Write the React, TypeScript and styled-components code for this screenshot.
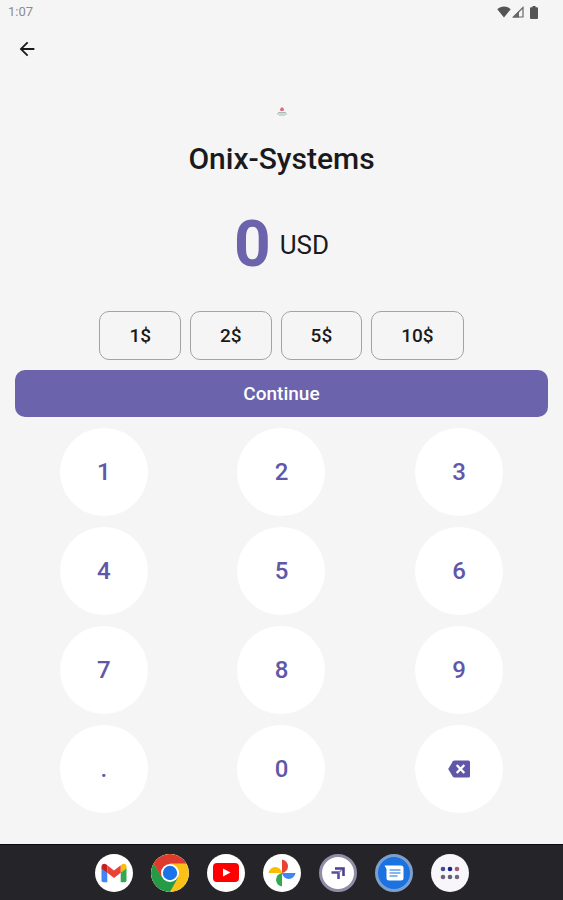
import React, { useState } from "react";
import styled, { createGlobalStyle } from "styled-components";

const purple = "#6b63ab";
const deepPurple = "#6157a8";

const GlobalStyle = createGlobalStyle`
  *, *::before, *::after { box-sizing: border-box; }
  body {
    margin: 0;
    background: #f5f5f5;
    color: #1a1a1c;
    font-family: Roboto, "Liberation Sans", sans-serif;
  }
  button { font-family: inherit; cursor: pointer; }
`;

const Screen = styled.div`
  display: flex;
  flex-direction: column;
  min-height: 100vh;
`;

const StatusBar = styled.header`
  display: flex;
  align-items: center;
  justify-content: space-between;
  height: 24px;
  padding: 0 25px 0 8px;
`;

const Clock = styled.time`
  font-size: 13px;
  line-height: 24px;
  color: #8c8c8c;
`;

const StatusIcons = styled.div`
  display: flex;
  align-items: center;
  gap: 6px;
  svg { display: block; }
`;

const Reception = styled.div`
  display: flex;
  gap: 1px;
`;

const TopBar = styled.nav`
  display: flex;
  align-items: center;
  height: 50px;
  padding: 0 15px;
`;

const BackButton = styled.button`
  display: grid;
  place-items: center;
  width: 24px;
  height: 24px;
  padding: 0;
  border: 0;
  background: none;
`;

const Main = styled.main`
  flex: 1;
  display: flex;
  flex-direction: column;
  padding: 32px 15px 30px;
`;

const Merchant = styled.section`
  display: flex;
  flex-direction: column;
  align-items: center;
  gap: 23px;
`;

const MerchantName = styled.h1`
  margin: 0;
  font-size: 30px;
  line-height: 36px;
  font-weight: 500;
`;

const Amount = styled.output`
  display: flex;
  align-items: center;
  justify-content: center;
  gap: 9px;
  margin: 32px 0 30px;
`;

const AmountValue = styled.span`
  font-size: 64px;
  line-height: 72px;
  font-weight: 700;
  color: ${purple};
`;

const Currency = styled.span`
  font-size: 26px;
  line-height: 32px;
`;

const Presets = styled.div`
  display: flex;
  justify-content: center;
  gap: 9px;
  margin-bottom: 10px;
`;

const Preset = styled.button`
  height: 49px;
  padding: 0 29px;
  border: 1px solid #a3a3a3;
  border-radius: 10px;
  background: transparent;
  color: #1a1a1c;
  font-size: 19px;
  line-height: 24px;
  font-weight: 500;
`;

const ContinueButton = styled.button`
  height: 47px;
  border: 0;
  border-radius: 10px;
  background: ${purple};
  color: #fff;
  font-size: 19px;
  line-height: 24px;
  font-weight: 500;
`;

const Keypad = styled.div`
  display: grid;
  grid-template-columns: repeat(3, 1fr);
  justify-items: center;
  row-gap: 11px;
  margin-top: 11px;
`;

const Key = styled.button`
  display: grid;
  place-items: center;
  width: 88px;
  height: 88px;
  padding: 0;
  border: 0;
  border-radius: 50%;
  background: #fff;
  color: ${deepPurple};
  font-size: 24px;
  line-height: 32px;
  font-weight: 500;
`;

const Dock = styled.footer`
  display: flex;
  align-items: center;
  justify-content: center;
  gap: 18px;
  height: 56px;
  border-top: 1px solid #0c0c0e;
  background: #252529;
`;

const DockApp = styled.button<{ $fill?: string; $ring?: string }>`
  display: grid;
  place-items: center;
  width: 38px;
  height: 38px;
  padding: 0;
  border: ${(p) => (p.$ring ? `3px solid ${p.$ring}` : "0")};
  border-radius: 50%;
  background: ${(p) => p.$fill ?? "#fff"};
  overflow: hidden;
  svg { display: block; }
`;

const WifiIcon = () => (
  <svg width="14" height="12" viewBox="0 0 14 12" aria-hidden="true">
    <path d="M7 11.5 0.3 3.2C2.2 1.5 4.5.6 7 .6s4.800.9 6.700 2.600Z" fill="#555" />
  </svg>
);

const SignalIcon = () => (
  <svg width="12" height="12" viewBox="0 0 12 12" aria-hidden="true">
    <path d="M11 1.500V11H1.500Z" fill="none" stroke="#666" strokeWidth="1.200" />
    <path d="M.5 11.500 7 5v6.500Z" fill="#666" />
  </svg>
);

const BatteryIcon = () => (
  <svg width="8" height="13" viewBox="0 0 8 13" aria-hidden="true">
    <path d="M2.500 0h3v1.300H7a1 1 0 0 1 1 1V12a1 1 0 0 1-1 1H1a1 1 0 0 1-1-1V2.300a1 1 0 0 1 1-1h1.500Z" fill="#555" />
  </svg>
);

const BackIcon = () => (
  <svg width="22" height="22" viewBox="0 0 24 24" aria-hidden="true">
    <path d="M20 11H7.830l5.590-5.590L12 4l-8 8 8 8 1.410-1.410L7.830 13H20z" fill="#1a1a1c" />
  </svg>
);

const MerchantLogo = () => (
  <svg width="12" height="12" viewBox="0 0 12 12" aria-hidden="true">
    <path d="M6 1 8 3 7.500 5h-3L4 3Z" fill="#dc6a7b" />
    <path d="M2 6.500h8M1 8h10" stroke="#a9bcb8" strokeWidth="1.200" />
    <path d="M3 9.500h6" stroke="#cbd6d3" />
  </svg>
);

const BackspaceIcon = () => (
  <svg width="22" height="18" viewBox="0 0 22 18" aria-hidden="true">
    <path d="M6.500.5H20.500A1.500 1.500 0 0 1 22 2v14a1.500 1.500 0 0 1-1.500 1.500h-14a2 2 0 0 1-1.600-.8L.2 9l4.700-7.700A2 2 0 0 1 6.500.5Z" fill={deepPurple} />
    <path d="m8.700 5 7.600 8m0-8-7.600 8" stroke="#fff" strokeWidth="2.400" />
  </svg>
);

const GmailIcon = () => (
  <svg width="26" height="20" viewBox="0 0 26 20" aria-hidden="true">
    <path d="M.5 5v12.500A1.800 1.800 0 0 0 2.300 19.300H6.300V8.500Z" fill="#4285f4" />
    <path d="M25.500 5v12.500a1.800 1.800 0 0 1-1.800 1.800h-4V8.500Z" fill="#34a853" />
    <path d="M19.700 3v6.800l5.800-4.300V3.500c0-2.500-2.700-3.600-4.500-2.200Z" fill="#fbbc04" />
    <path d="M.5 5.500V3.500C.5 1 3.200-.1 5 1.300L6.300 2.300v7.500Z" fill="#c5221f" />
    <path d="M6.300 9.800V2.300L13 7.400l6.700-5.100v7.500L13 14.900Z" fill="#ea4335" />
  </svg>
);

const ChromeIcon = () => (
  <svg width="38" height="38" viewBox="0 0 38 38" aria-hidden="true">
    <circle cx="19" cy="19" r="19" fill="#fbc116" />
    <path d="M2.550 9.500A19 19 0 0 0 19 38l8-14.500-16-.5Z" fill="#259b47" />
    <path d="M2.550 9.500a19 19 0 0 1 32.900 0H19L11 23.500Z" fill="#dc3b2d" />
    <circle cx="19" cy="19" r="9" fill="#fff" />
    <circle cx="19" cy="19" r="7.200" fill="#1a73e8" />
  </svg>
);

const YoutubeIcon = () => (
  <svg width="26" height="19" viewBox="0 0 26 19" aria-hidden="true">
    <rect width="26" height="19" rx="4" fill="#f00" />
    <path d="m10 5.500 7.500 4-7.500 4Z" fill="#fff" />
  </svg>
);

const PhotosIcon = () => (
  <svg width="28" height="28" viewBox="0 0 28 28" aria-hidden="true">
    <path d="M14 14V.5A6.800 6.800 0 0 1 14 14Z" fill="#e94235" />
    <path d="M14 14h13.500A6.800 6.800 0 0 1 14 14Z" fill="#4285f4" />
    <path d="M14 14v13.500A6.800 6.800 0 0 1 14 14Z" fill="#34a853" />
    <path d="M14 14H.5A6.800 6.800 0 0 1 14 14Z" fill="#fbbc04" />
  </svg>
);

const ArrowsIcon = () => (
  <svg width="16" height="16" viewBox="0 0 16 16" aria-hidden="true">
    <path d="M5 3.500h8.500V11" fill="none" stroke="#4d3f92" strokeWidth="2.600" />
    <path d="M1.500 7.500H8.500V14" fill="none" stroke="#5c4da0" strokeWidth="2.600" />
    <path d="m8.500 8 3-3" stroke="#8a80bb" strokeWidth="1.300" />
  </svg>
);

const MessagesIcon = () => (
  <svg width="20" height="16" viewBox="0 0 20 16" aria-hidden="true">
    <path d="M.5.5H17a2.500 2.500 0 0 1 2.500 2.500v10A2.500 2.500 0 0 1 17 15.500H5A2.500 2.500 0 0 1 2.500 13V4Z" fill="#fff" />
    <path d="M5.500 5h11M5.500 8h11M5.500 11h8" stroke="#5e9fea" strokeWidth="1.300" />
  </svg>
);

const AppsIcon = () => (
  <svg width="20" height="14" viewBox="0 0 20 14" aria-hidden="true">
    <circle cx="3" cy="3" r="2.300" fill="#3e4c96" />
    <circle cx="10" cy="3" r="2.300" fill="#20208c" />
    <circle cx="17" cy="3" r="2.300" fill="#a45b7b" />
    <circle cx="3" cy="11" r="2.300" fill="#686878" />
    <circle cx="10" cy="11" r="2.300" fill="#606078" />
    <circle cx="17" cy="11" r="2.300" fill="#706878" />
  </svg>
);

const dockApps = [
  { name: "Gmail", icon: <GmailIcon /> },
  { name: "Chrome", icon: <ChromeIcon /> },
  { name: "YouTube", icon: <YoutubeIcon /> },
  { name: "Photos", icon: <PhotosIcon /> },
  { name: "Payments", icon: <ArrowsIcon />, ring: "#8f8ca6" },
  { name: "Messages", icon: <MessagesIcon />, fill: "#1a73e0", ring: "#7c9fce" },
  { name: "All apps", icon: <AppsIcon />, fill: "#f8f6fb" },
];

const keys = ["1", "2", "3", "4", "5", "6", "7", "8", "9", ".", "0"];

export default function App() {
  const [amount, setAmount] = useState("0");

  const press = (key: string) =>
    setAmount((value) => {
      if (key === "." && value.includes(".")) return value;
      return value === "0" && key !== "." ? key : value + key;
    });

  return (
    <>
      <GlobalStyle />
      <Screen>
        <StatusBar>
          <Clock>1:07</Clock>
          <StatusIcons>
            <Reception>
              <WifiIcon />
              <SignalIcon />
            </Reception>
            <BatteryIcon />
          </StatusIcons>
        </StatusBar>
        <TopBar>
          <BackButton aria-label="Back"><BackIcon /></BackButton>
        </TopBar>
        <Main>
          <Merchant>
            <MerchantLogo />
            <MerchantName>Onix-Systems</MerchantName>
          </Merchant>
          <Amount>
            <AmountValue>{amount}</AmountValue>
            <Currency>USD</Currency>
          </Amount>
          <Presets>
            {[1, 2, 5, 10].map((n) => (
              <Preset key={n} onClick={() => setAmount(String(n))}>{`${n}$`}</Preset>
            ))}
          </Presets>
          <ContinueButton>Continue</ContinueButton>
          <Keypad>
            {keys.map((key) => (
              <Key key={key} onClick={() => press(key)}>{key}</Key>
            ))}
            <Key aria-label="Delete" onClick={() => setAmount((v) => v.slice(0, -1) || "0")}>
              <BackspaceIcon />
            </Key>
          </Keypad>
        </Main>
        <Dock>
          {dockApps.map((app) => (
            <DockApp key={app.name} aria-label={app.name} $fill={app.fill} $ring={app.ring}>
              {app.icon}
            </DockApp>
          ))}
        </Dock>
      </Screen>
    </>
  );
}
